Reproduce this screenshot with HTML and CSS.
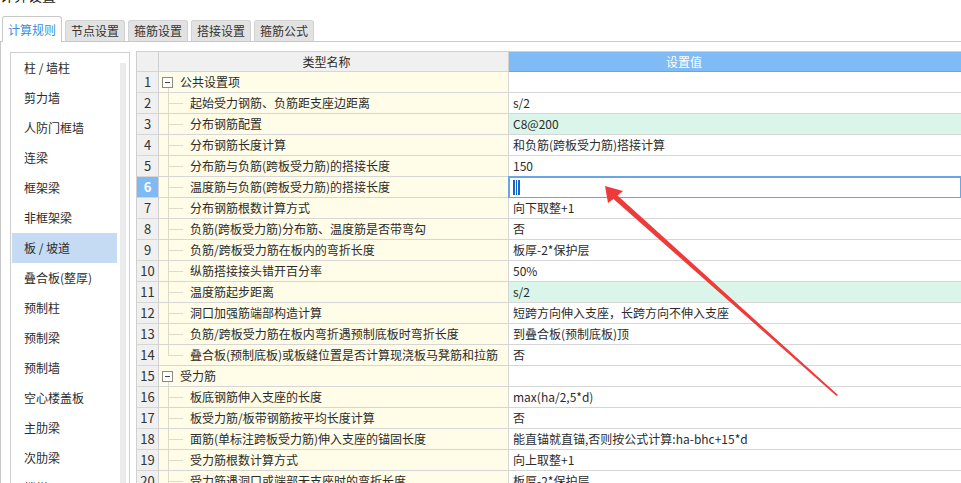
FILE: index.html
```html
<!DOCTYPE html>
<html lang="zh-CN">
<head>
<meta charset="utf-8">
<title>计算设置</title>
<link rel="stylesheet" href="styles.css">
</head>
<body>
<div class="title"><span>计算设置</span></div>
<div class="tabbar">
  <div class="tab active">计算规则</div>
  <div class="tab">节点设置</div>
  <div class="tab">箍筋设置</div>
  <div class="tab">搭接设置</div>
  <div class="tab">箍筋公式</div>
</div>
<div class="panel">
  <div class="sidebar">
    <ul class="list">
      <li>柱 / 墙柱</li>
      <li>剪力墙</li>
      <li>人防门框墙</li>
      <li>连梁</li>
      <li>框架梁</li>
      <li>非框架梁</li>
      <li class="sel">板 / 坡道</li>
      <li>叠合板(整厚)</li>
      <li>预制柱</li>
      <li>预制梁</li>
      <li>预制墙</li>
      <li>空心楼盖板</li>
      <li>主肋梁</li>
      <li>次肋梁</li>
      <li>楼梯</li>
    </ul>
    <div class="scroll"></div>
  </div>
  <div class="grid">
    <div class="row head">
      <div class="c-num"></div>
      <div class="c-name">类型名称</div>
      <div class="c-val">设置值</div>
    </div>
    <div class="row"><div class="c-num">1</div><div class="c-name group"><span class="minus"></span>公共设置项</div><div class="c-val"></div></div>
    <div class="row"><div class="c-num">2</div><div class="c-name"><span class="tree"></span>起始受力钢筋、负筋距支座边距离</div><div class="c-val">s/2</div></div>
    <div class="row"><div class="c-num">3</div><div class="c-name"><span class="tree"></span>分布钢筋配置</div><div class="c-val green">C8@200</div></div>
    <div class="row"><div class="c-num">4</div><div class="c-name"><span class="tree"></span>分布钢筋长度计算</div><div class="c-val">和负筋(跨板受力筋)搭接计算</div></div>
    <div class="row"><div class="c-num">5</div><div class="c-name"><span class="tree"></span>分布筋与负筋(跨板受力筋)的搭接长度</div><div class="c-val">150</div></div>
    <div class="row"><div class="c-num cur">6</div><div class="c-name"><span class="tree"></span>温度筋与负筋(跨板受力筋)的搭接长度</div><div class="c-val editing"><span class="caret"></span></div></div>
    <div class="row"><div class="c-num">7</div><div class="c-name"><span class="tree"></span>分布钢筋根数计算方式</div><div class="c-val">向下取整+1</div></div>
    <div class="row"><div class="c-num">8</div><div class="c-name"><span class="tree"></span>负筋(跨板受力筋)分布筋、温度筋是否带弯勾</div><div class="c-val">否</div></div>
    <div class="row"><div class="c-num">9</div><div class="c-name"><span class="tree"></span>负筋/跨板受力筋在板内的弯折长度</div><div class="c-val">板厚-2*保护层</div></div>
    <div class="row"><div class="c-num">10</div><div class="c-name"><span class="tree"></span>纵筋搭接接头错开百分率</div><div class="c-val">50%</div></div>
    <div class="row"><div class="c-num">11</div><div class="c-name"><span class="tree"></span>温度筋起步距离</div><div class="c-val green">s/2</div></div>
    <div class="row"><div class="c-num">12</div><div class="c-name"><span class="tree"></span>洞口加强筋端部构造计算</div><div class="c-val">短跨方向伸入支座，长跨方向不伸入支座</div></div>
    <div class="row"><div class="c-num">13</div><div class="c-name"><span class="tree"></span>负筋/跨板受力筋在板内弯折遇预制底板时弯折长度</div><div class="c-val">到叠合板(预制底板)顶</div></div>
    <div class="row"><div class="c-num">14</div><div class="c-name"><span class="tree last"></span>叠合板(预制底板)或板缝位置是否计算现浇板马凳筋和拉筋</div><div class="c-val">否</div></div>
    <div class="row"><div class="c-num">15</div><div class="c-name group"><span class="minus"></span>受力筋</div><div class="c-val"></div></div>
    <div class="row"><div class="c-num">16</div><div class="c-name"><span class="tree"></span>板底钢筋伸入支座的长度</div><div class="c-val">max(ha/2,5*d)</div></div>
    <div class="row"><div class="c-num">17</div><div class="c-name"><span class="tree"></span>板受力筋/板带钢筋按平均长度计算</div><div class="c-val">否</div></div>
    <div class="row"><div class="c-num">18</div><div class="c-name"><span class="tree"></span>面筋(单标注跨板受力筋)伸入支座的锚固长度</div><div class="c-val">能直锚就直锚,否则按公式计算:ha-bhc+15*d</div></div>
    <div class="row"><div class="c-num">19</div><div class="c-name"><span class="tree"></span>受力筋根数计算方式</div><div class="c-val">向上取整+1</div></div>
    <div class="row"><div class="c-num">20</div><div class="c-name"><span class="tree"></span>受力筋遇洞口或端部无支座时的弯折长度</div><div class="c-val">板厚-2*保护层</div></div>
  </div>
</div>
<svg class="arrow" width="961" height="483" viewBox="0 0 961 483" xmlns="http://www.w3.org/2000/svg">
  <polygon points="605,186 623,191 617.5,195.5 838,395 836.5,396 613.5,199 608,203" fill="#ef3a3a"/>
</svg>
</body>
</html>
```

FILE: styles.css
```css
* { box-sizing: border-box; }
html, body { margin: 0; padding: 0; }
body {
  width: 961px;
  height: 483px;
  overflow: hidden;
  position: relative;
  background: #fff;
  color: #2b2b2b;
  font-family: "Noto Sans CJK SC", "Noto Sans", sans-serif;
  font-size: 12px;
}

.title { height: 5px; overflow: hidden; }
.title span {
  display: block;
  font-size: 14px;
  line-height: 16px;
  margin-top: -13px;
  color: #222;
}

.tabbar {
  display: flex;
  align-items: flex-end;
  gap: 3px;
  height: 37px;
  padding-left: 2px;
  border-bottom: 1px solid #c8c8c8;
}
.tab {
  width: 60px;
  height: 21px;
  line-height: 20px;
  text-align: center;
  background: #e2e2e2;
  border: 1px solid #d2d2d2;
  border-bottom: none;
  border-radius: 3px 3px 0 0;
  color: #333;
}
.tab.active {
  height: 26px;
  line-height: 25px;
  margin-bottom: -1px;
  background: #fff;
  border-color: #c8c8c8;
  color: #3a8ee0;
}

.panel {
  display: flex;
  align-items: flex-start;
  gap: 6px;
  height: 442px;
  padding: 9px 0 0 9px;
  border-left: 1px solid #c8c8c8;
}

.sidebar {
  display: flex;
  width: 120px;
  height: 440px;
  margin-top: 1px;
  border: 1px solid #cfcfcf;
  border-bottom: none;
  flex-shrink: 0;
}
.list {
  list-style: none;
  margin: 0;
  padding: 0 0 0 1px;
  width: 106px;
}
.list li {
  height: 30px;
  line-height: 30px;
  padding-left: 12px;
  white-space: nowrap;
  color: #2b2b2b;
}
.list li.sel { background: #c5dbf3; }
.scroll {
  width: 6px;
  margin: 10px 0 0 3px;
  height: 420px;
  background: #ebebeb;
}

.grid {
  flex: 1;
  border-top: 1px solid #d0d0d0;
  border-left: 1px solid #d0d0d0;
}
.row {
  display: flex;
  height: 21px;
}
.row > div {
  height: 21px;
  line-height: 20px;
  border-bottom: 1px solid #d6d6d6;
  white-space: nowrap;
  overflow: hidden;
}
.c-num {
  width: 22px;
  flex-shrink: 0;
  text-align: center;
  background: #f0f0f0;
  border-right: 1px solid #d0d0d0;
  font-size: 13px;
  color: #333;
}
.c-num.cur {
  background: #80baf5;
  color: #fff;
  font-weight: bold;
}
.c-name {
  width: 350px;
  flex-shrink: 0;
  display: flex;
  align-items: center;
  background: #fffce8;
  border-right: 1px solid #d6d6d6;
}
.c-val {
  flex: 1;
  padding-left: 4px;
  background: #fff;
}
.c-val.green { background: #daf5e9; }
.c-val.editing {
  outline: 2px solid #6aa6e6;
  outline-offset: -1px;
  display: flex;
  align-items: center;
}
.caret {
  display: inline-block;
  width: 7px;
  height: 15px;
  background: linear-gradient(to right, #1665c8 2px, #fff 2px, #fff 3px, #1665c8 3px, #1665c8 4px, #fff 4px, #fff 5px, #1665c8 5px);
}

.row.head > div {
  height: 20px;
  line-height: 19px;
  background: #f0f0f0;
}
.row.head { height: 20px; }
.row.head .c-name {
  justify-content: center;
  padding-right: 14px;
  border-right-color: #d0d0d0;
}
.row.head .c-val {
  background: #80bbf6;
  color: #fff;
  text-align: center;
  padding-right: 106px;
  border-bottom-color: #68a4e6;
}

.tree {
  align-self: stretch;
  flex-shrink: 0;
  width: 22px;
  margin-left: 9px;
  background:
    linear-gradient(#dedcc8, #dedcc8) 0 0 / 1px 100% no-repeat,
    linear-gradient(#dedcc8, #dedcc8) 0 10px / 15px 1px no-repeat;
}
.tree.last {
  background:
    linear-gradient(#dedcc8, #dedcc8) 0 0 / 1px 11px no-repeat,
    linear-gradient(#dedcc8, #dedcc8) 0 10px / 15px 1px no-repeat;
}
.group {
  background-image: linear-gradient(#dedcc8, #dedcc8);
  background-size: 1px 5px;
  background-position: 9px 15px;
  background-repeat: no-repeat;
}
.minus {
  flex-shrink: 0;
  width: 11px;
  height: 11px;
  margin: 0 7px 0 3px;
  border: 1px solid #8a8a8a;
  background: #fff linear-gradient(#444, #444) center / 5px 1px no-repeat;
}

.arrow {
  position: absolute;
  left: 0;
  top: 0;
  pointer-events: none;
}
```
